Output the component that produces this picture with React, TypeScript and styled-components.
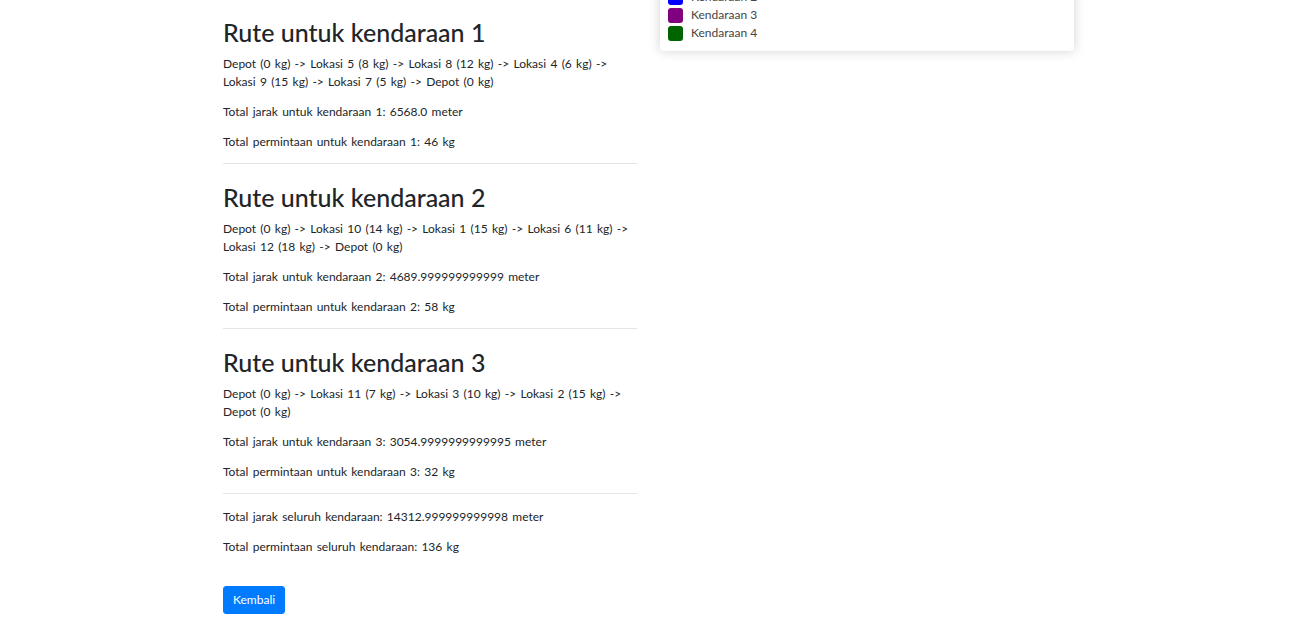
import React from "react";
import styled, { createGlobalStyle } from "styled-components";

const GlobalStyle = createGlobalStyle`
  html, body { margin: 0; padding: 0; background: #ffffff; }
  body {
    font-family: Lato, "Noto Sans", Arial, sans-serif;
    font-size: 12px;
    line-height: 18px;
    color: #212529;
    overflow: hidden;
  }
`;

const Page = styled.div`
  margin-top: -39px;
  padding-left: 223px;
`;

const Row = styled.div`
  display: grid;
  grid-template-columns: 414px 414px;
  column-gap: 23px;
  align-items: start;
`;

const LeftCol = styled.div`
  padding-top: 38px;
`;

const Heading = styled.h2`
  margin: 18px 0 8px;
  font-size: 25px;
  font-weight: 500;
  line-height: 30px;
  color: #212529;
`;

const Para = styled.p`
  margin: 0 0 12px;
  font-size: 12px;
  line-height: 18px;
  word-spacing: 1.2px;
`;

const Rule = styled.hr`
  margin: 12px 0;
  border: 0;
  border-top: 1px solid rgba(0, 0, 0, 0.1);
`;

const Summary = styled.div`
  padding-top: 2px;
`;

const Button = styled.button`
  margin-top: 18px;
  display: inline-block;
  height: 28px;
  padding: 0 9px;
  font-family: inherit;
  font-size: 12px;
  line-height: 18px;
  color: #ffffff;
  background: #007bff;
  border: 1px solid #007bff;
  border-radius: 3px;
`;

const Legend = styled.div`
  background: #ffffff;
  border-radius: 4px;
  box-shadow: 0 0 12px rgba(0, 0, 0, 0.18);
  padding: 9px 8px;
`;

const LegendItem = styled.div`
  display: flex;
  align-items: center;
  gap: 8px;
  height: 18px;
  font-size: 12px;
  color: #444444;
`;

const Swatch = styled.span<{ $color: string }>`
  width: 15px;
  height: 15px;
  border-radius: 3px;
  background: ${(p) => p.$color};
`;

const routes = [
  {
    n: 1,
    path: "Depot (0 kg) -> Lokasi 5 (8 kg) -> Lokasi 8 (12 kg) -> Lokasi 4 (6 kg) -> Lokasi 9 (15 kg) -> Lokasi 7 (5 kg) -> Depot (0 kg)",
    dist: "6568.0",
    demand: 46,
  },
  {
    n: 2,
    path: "Depot (0 kg) -> Lokasi 10 (14 kg) -> Lokasi 1 (15 kg) -> Lokasi 6 (11 kg) -> Lokasi 12 (18 kg) -> Depot (0 kg)",
    dist: "4689.999999999999",
    demand: 58,
  },
  {
    n: 3,
    path: "Depot (0 kg) -> Lokasi 11 (7 kg) -> Lokasi 3 (10 kg) -> Lokasi 2 (15 kg) -> Depot (0 kg)",
    dist: "3054.9999999999995",
    demand: 32,
  },
];

const legend = [
  { label: "Kendaraan 1", color: "#ff0000" },
  { label: "Kendaraan 2", color: "#0000ff" },
  { label: "Kendaraan 3", color: "#800080" },
  { label: "Kendaraan 4", color: "#006400" },
];

export default function App() {
  return (
    <>
      <GlobalStyle />
      <Page>
        <Row>
          <LeftCol>
            {routes.map((r) => (
              <section key={r.n}>
                <Heading>Rute untuk kendaraan {r.n}</Heading>
                <Para>{r.path}</Para>
                <Para>
                  Total jarak untuk kendaraan {r.n}: {r.dist} meter
                </Para>
                <Para>
                  Total permintaan untuk kendaraan {r.n}: {r.demand} kg
                </Para>
                <Rule />
              </section>
            ))}
            <Summary>
              <Para>Total jarak seluruh kendaraan: 14312.999999999998 meter</Para>
              <Para>Total permintaan seluruh kendaraan: 136 kg</Para>
              <Button type="button">Kembali</Button>
            </Summary>
          </LeftCol>
          <Legend>
            {legend.map((l) => (
              <LegendItem key={l.label}>
                <Swatch $color={l.color} />
                {l.label}
              </LegendItem>
            ))}
          </Legend>
        </Row>
      </Page>
    </>
  );
}
